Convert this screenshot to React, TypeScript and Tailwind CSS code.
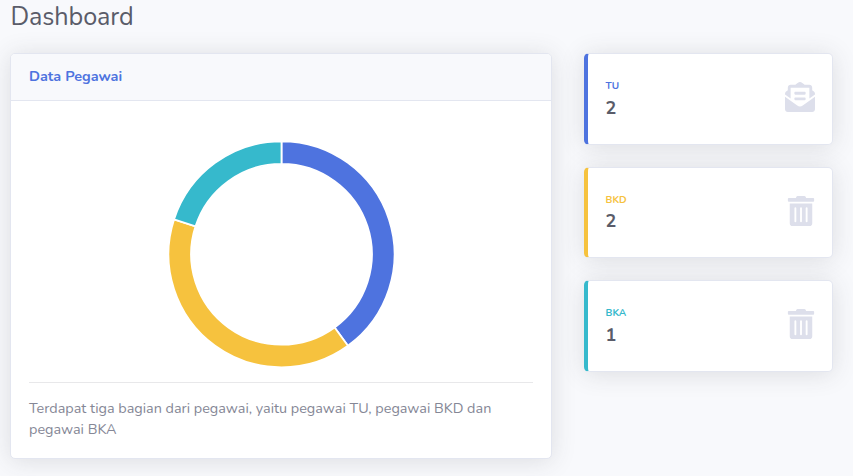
import type { IconType } from "react-icons";
import { FaEnvelopeOpenText, FaTrashAlt } from "react-icons/fa";

const SHADOW = "shadow-[0_2px_25px_0_rgba(58,59,69,0.15)]";

type Slice = { value: number; color: string };

const slices: Slice[] = [
  { value: 2, color: "#4e73df" },
  { value: 2, color: "#f6c23e" },
  { value: 1, color: "#36b9cc" },
];

function Donut({ data }: { data: Slice[] }) {
  const outer = 113;
  const inner = 90.4;
  const total = data.reduce((sum, s) => sum + s.value, 0);
  const point = (r: number, t: number) =>
    `${r * Math.sin(t * 2 * Math.PI)} ${-r * Math.cos(t * 2 * Math.PI)}`;
  let start = 0;
  return (
    <svg viewBox="-114.5 -114.3 229 229" className="block h-[229px] w-[229px]">
      {data.map((s) => {
        const a = start;
        const b = start + s.value / total;
        start = b;
        return (
          <path
            key={s.color}
            d={`M${point(outer, a)} A${outer} ${outer} 0 0 1 ${point(outer, b)} L${point(inner, b)} A${inner} ${inner} 0 0 0 ${point(inner, a)} Z`}
            fill={s.color}
            stroke="#fff"
            strokeWidth={1.8}
          />
        );
      })}
    </svg>
  );
}

type StatProps = {
  label: string;
  value: number;
  border: string;
  text: string;
  padding: string;
  icon: IconType;
};

function StatCard({ label, value, border, text, padding, icon: Icon }: StatProps) {
  return (
    <div
      className={`flex h-[91.5px] items-center justify-between rounded-[5px] border border-l-4 border-[#e3e6f0] bg-white pl-[17.5px] ${padding} ${border} ${SHADOW}`}
    >
      <div>
        <div className={`mb-[2.5px] text-[10px] leading-[15px] font-bold ${text}`}>{label}</div>
        <div className="text-[18px] leading-[22px] font-bold text-[#5a5c69]">{value}</div>
      </div>
      <Icon className="mb-[3px] h-[30px] w-auto text-[#dddfeb]" />
    </div>
  );
}

export default function App() {
  return (
    <div className="h-[476px] overflow-hidden bg-[#f8f9fc] pr-[20.5px] pl-[10px] font-[Nunito,Lato,sans-serif]">
      <h1 className="h-[53px] pt-[2px] pl-[0.5px] text-[25.2px] leading-[30px] tracking-[-0.1px] text-[#5a5c69]">
        Dashboard
      </h1>
      <div className="flex items-start justify-between">
        <section className={`w-[542px] rounded-[5px] border border-[#e3e6f0] bg-white ${SHADOW}`}>
          <header className="flex h-[47px] items-center rounded-t-[4px] border-b border-[#e3e6f0] bg-[#f8f9fc] px-[18px]">
            <h2 className="text-[14.4px] font-bold text-[#4e73df]">Data Pegawai</h2>
          </header>
          <div className="px-[18px] pb-[18px]">
            <div className="flex justify-center pt-[39px] pb-[13px] pl-px">
              <Donut data={slices} />
            </div>
            <hr className="mb-[15px] border-[#e8e8ea]" />
            <p className="text-[14.4px] leading-[21px] text-[#858796]">
              Terdapat tiga bagian dari pegawai, yaitu pegawai TU, pegawai BKD dan
              <br />
              pegawai BKA
            </p>
          </div>
        </section>
        <aside className="flex w-[248.5px] flex-col gap-[22px]">
          <StatCard label="TU" value={2} border="border-l-[#4e73df]" text="text-[#4e73df]" padding="pr-[17px]" icon={FaEnvelopeOpenText} />
          <StatCard label="BKD" value={2} border="border-l-[#f6c23e]" text="text-[#f6c23e]" padding="pr-[15.5px]" icon={FaTrashAlt} />
          <StatCard label="BKA" value={1} border="border-l-[#36b9cc]" text="text-[#36b9cc]" padding="pr-[15.5px]" icon={FaTrashAlt} />
        </aside>
      </div>
    </div>
  );
}
